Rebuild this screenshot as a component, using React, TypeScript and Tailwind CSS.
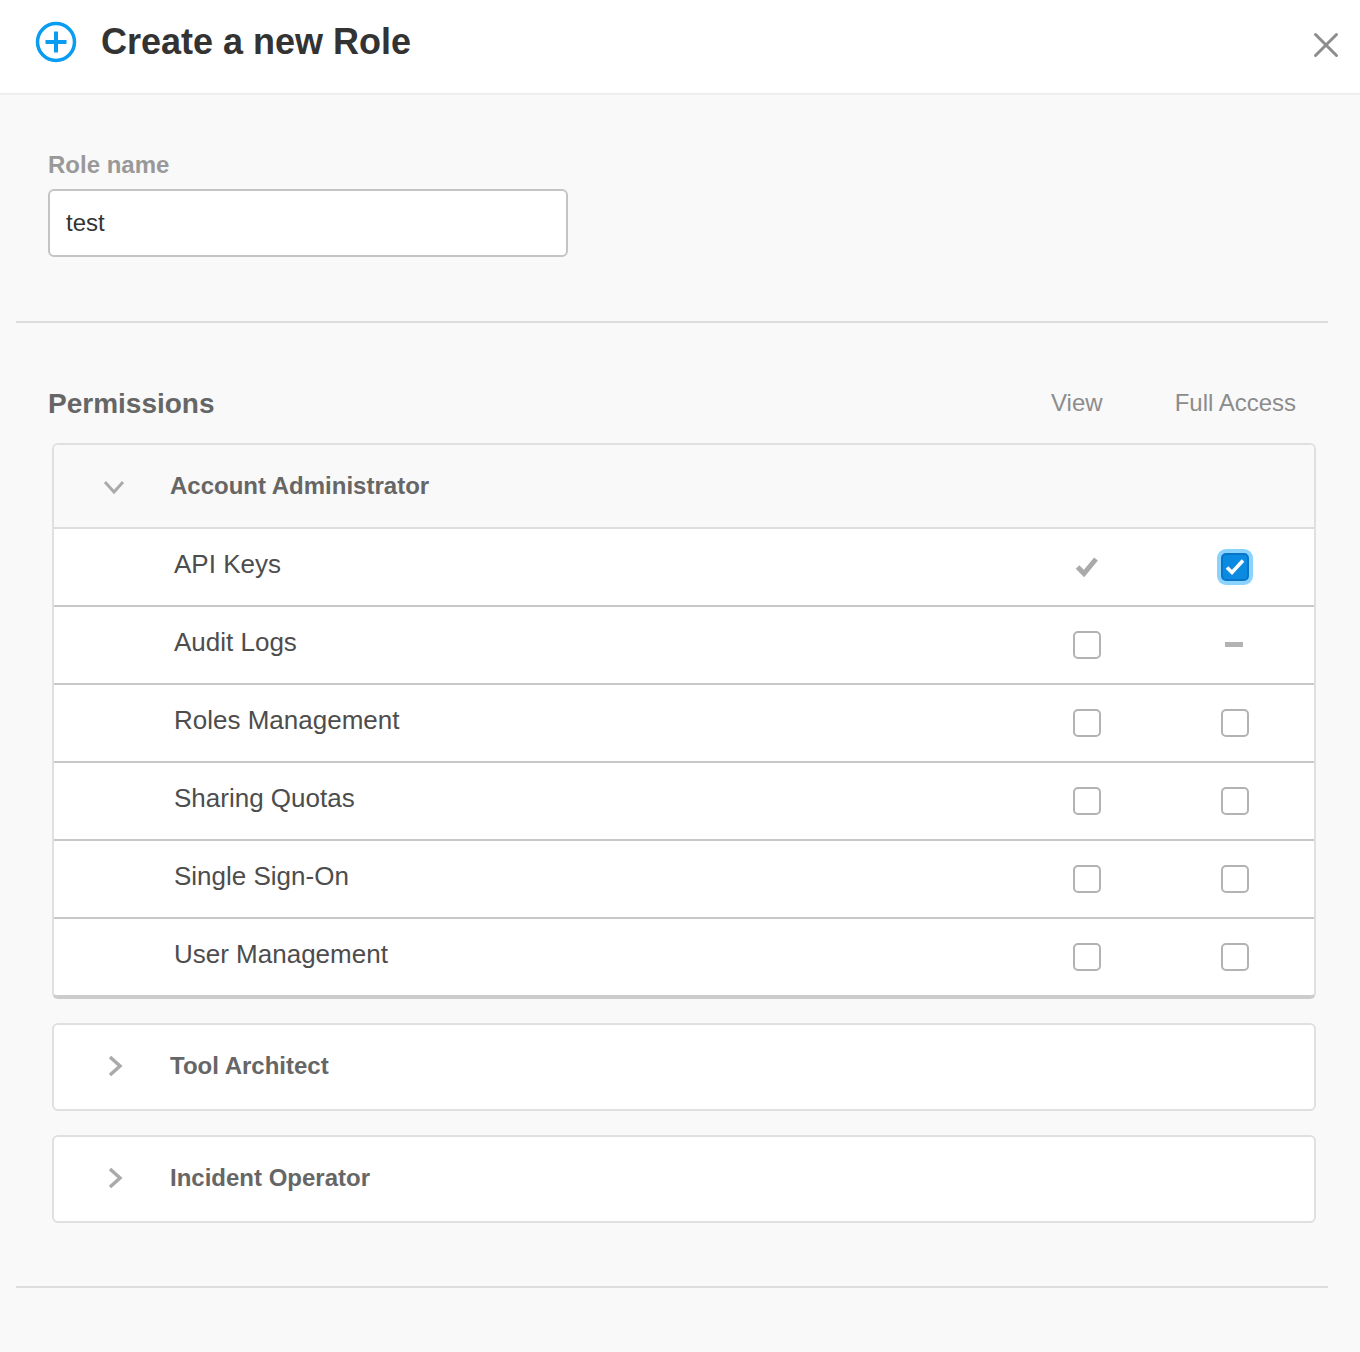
import { X } from "lucide-react";

const rows = [
  { name: "API Keys", view: "check", full: "checked" },
  { name: "Audit Logs", view: "box", full: "dash" },
  { name: "Roles Management", view: "box", full: "box" },
  { name: "Sharing Quotas", view: "box", full: "box" },
  { name: "Single Sign-On", view: "box", full: "box" },
  { name: "User Management", view: "box", full: "box" },
];

function Cell({ kind }: { kind: string }) {
  if (kind === "check") {
    return (
      <svg width="24" height="24" viewBox="0 0 24 24" className="-mt-[1px]">
        <path d="M2.5 12l6.5 6.5L21 4" fill="none" stroke="#aaaaaa" strokeWidth="5" />
      </svg>
    );
  }
  if (kind === "dash") {
    return <div className="mr-[2px] mb-[2px] h-[5px] w-[18px] bg-[#b3b3b3]" />;
  }
  if (kind === "checked") {
    return (
      <div className="flex h-[36px] w-[36px] items-center justify-center rounded-[9px] bg-[#8bd3ff]">
        <div className="flex h-7 w-7 items-center justify-center rounded-[5px] border-2 border-[#0a74c9] bg-[#0a8ae0]">
          <svg width="22" height="22" viewBox="0 0 22 22">
            <path d="M3 11.5l5 5L19 4.5" fill="none" stroke="#ffffff" strokeWidth="3.6" />
          </svg>
        </div>
      </div>
    );
  }
  return <div className="h-7 w-7 rounded-[5px] border-2 border-[#b3b3b3] bg-white" />;
}

function Chevron({ down }: { down?: boolean }) {
  return down ? (
    <svg width="24" height="16" viewBox="0 0 24 16" className="mt-[2px]">
      <path d="M3 3l9 10 9-10" fill="none" stroke="#aaaaaa" strokeWidth="3" />
    </svg>
  ) : (
    <svg width="16" height="24" viewBox="0 0 16 24">
      <path d="M3 3l10 9-10 9" fill="none" stroke="#aaaaaa" strokeWidth="3.5" />
    </svg>
  );
}

function Collapsed({ title }: { title: string }) {
  return (
    <div className="mx-[52px] mt-[24px] flex h-[88px] w-[1264px] items-center rounded-md border-2 border-[#e0e0e0] bg-white pb-[2px]">
      <div className="ml-[53px] flex w-[63px]">
        <Chevron />
      </div>
      <span className="text-[24px] font-bold text-[#666666]">{title}</span>
    </div>
  );
}

export default function App() {
  return (
    <div className="h-[1352px] w-[1360px] overflow-hidden bg-[#f9f9f9] font-['Liberation_Sans',Arial,sans-serif]">
      <header className="flex h-[95px] items-center border-b-2 border-[#eeeeee] bg-white pb-[10px]">
        <svg width="42" height="42" viewBox="0 0 42 42" className="ml-[35px]">
          <circle cx="21" cy="21" r="18.5" fill="none" stroke="#0a9cf0" strokeWidth="3.5" />
          <path d="M21 10.5v21M10.5 21h21" fill="none" stroke="#0a9cf0" strokeWidth="4" />
        </svg>
        <h1 className="ml-[24px] text-[36px] font-bold text-[#333333]">Create a new Role</h1>
        <X className="mt-[7px] ml-auto mr-[13px] h-[42px] w-[42px] text-[#8c8c8c]" strokeWidth={1.7} />
      </header>

      <div className="px-[48px] pt-[54px]">
        <label className="block text-[24px] leading-[32px] font-bold text-[#999999]">Role name</label>
        <div className="mt-[8px] flex h-[68px] w-[520px] items-center rounded-md border-2 border-[#c4c4c4] bg-white pl-[16px] text-[24px] text-[#333333]">
          test
        </div>
      </div>

      <hr className="mx-[16px] mt-[64px] w-[1312px] border-t-2 border-[#dddddd]" />

      <div className="mx-[48px] mt-[63px] flex h-[36px] items-center">
        <h2 className="text-[28px] font-bold text-[#666666]">Permissions</h2>
        <span className="ml-auto pb-[2px] text-[24px] text-[#8c8c8c]">View</span>
        <span className="ml-[72px] mr-[16px] pb-[2px] text-[24px] text-[#8c8c8c]">Full Access</span>
      </div>

      <div className="mx-[52px] mt-[21px] w-[1264px] rounded-md border-2 border-b-4 border-[#e0e0e0] border-b-[#cccccc] bg-white">
        <div className="flex h-[84px] items-center rounded-t-md border-b-2 border-[#dddddd] bg-[#f9f9f9]">
          <div className="ml-[48px] flex w-[68px]">
            <Chevron down />
          </div>
          <span className="text-[24px] font-bold text-[#666666]">Account Administrator</span>
        </div>
        {rows.map((r, i) => (
          <div
            key={r.name}
            className={`flex items-center ${i < rows.length - 1 ? "h-[78px] border-b-2 border-[#c8c8c8]" : "h-[76px]"}`}
          >
            <span className="ml-[120px] pb-[6px] text-[26px] text-[#4d4d4d]">{r.name}</span>
            <div className="ml-auto flex w-[60px] justify-center">
              <Cell kind={r.view} />
            </div>
            <div className="mr-[49px] ml-[88px] flex w-[60px] justify-center">
              <Cell kind={r.full} />
            </div>
          </div>
        ))}
      </div>

      <Collapsed title="Tool Architect" />
      <Collapsed title="Incident Operator" />

      <hr className="mx-[16px] mt-[63px] w-[1312px] border-t-2 border-[#dddddd]" />
    </div>
  );
}
